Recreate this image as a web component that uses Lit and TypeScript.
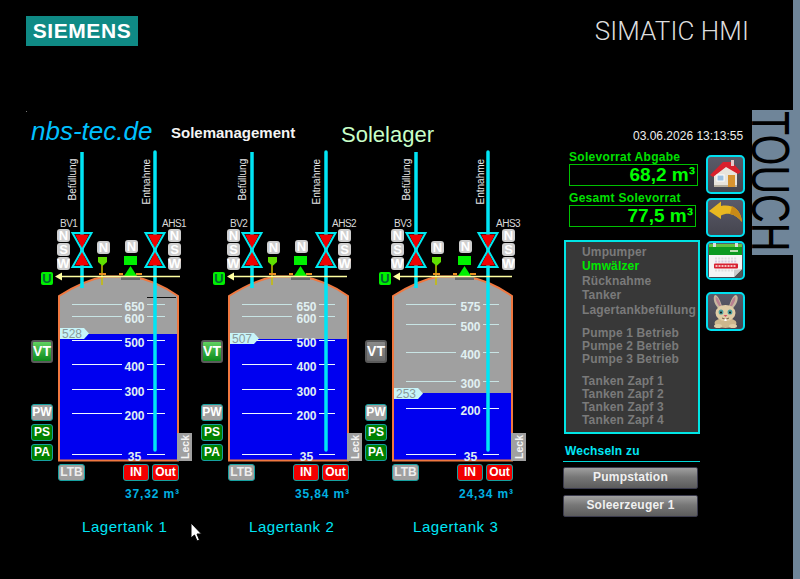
import { LitElement, html, css, svg } from "lit";
import { customElement } from "lit/decorators.js";

interface Tank {
  name: string; bv: string; ahs: string; level: number; levelTop: number; blueTop: number;
  scale: [string, number][]; vol: string; vtOn: boolean;
  pipeDx: number; uDx: number; lineEnd: number; labelDx: number; rLine: [number, number]; nameDx: number;
}
const TANKS: Tank[] = [
  { name: "Lagertank 1", bv: "BV1", ahs: "AHS1", level: 528, levelTop: 328, blueTop: 334, vol: "37,32 m³", vtOn: true,
    scale: [["650", 304], ["600", 316], ["500", 340], ["400", 364], ["300", 389], ["200", 413], ["35", 454]],
    pipeDx: 0, uDx: 0, lineEnd: 180, labelDx: 0, rLine: [147, 165], nameDx: 0 },
  { name: "Lagertank 2", bv: "BV2", ahs: "AHS2", level: 507, levelTop: 333, blueTop: 339, vol: "35,84 m³", vtOn: true,
    scale: [["650", 304], ["600", 316], ["500", 340], ["400", 364], ["300", 389], ["200", 413], ["35", 454]],
    pipeDx: 1, uDx: 2, lineEnd: 177, labelDx: 2, rLine: [149, 165], nameDx: -3 },
  { name: "Lagertank 3", bv: "BV3", ahs: "AHS3", level: 253, levelTop: 388, blueTop: 393, vol: "24,34 m³", vtOn: false,
    scale: [["575", 304], ["500", 324], ["400", 352], ["300", 381], ["200", 408], ["35", 454]],
    pipeDx: -1, uDx: 4, lineEnd: 178, labelDx: 2, rLine: [149, 165], nameDx: -3 },
];

const valve = (x: number) => svg`
  <path d="M${x - 9.500} 233H${x + 9.500}L${x - 9.500} 267H${x + 9.500}Z" fill="none" stroke="#00e8f0" stroke-width="2"/>
  <path d="M${x - 7} 234.500H${x + 7}L${x} 248Z" fill="#f00000"/>
  <path d="M${x - 7} 265.500H${x + 7}L${x} 252Z" fill="#f00000"/>`;

const HOME = html`<svg viewBox="0 0 35 35"><path d="M6 17V30H29V16L17 6Z" fill="#e8e4dc"/><path d="M6 28H29V30H6Z" fill="#b8b0a0"/><path d="M2 18L15 5H24L33 15L30 17L18 10L5 20Z" fill="#d8202c"/><path d="M23 3h3v6h-3z" fill="#e8c8c8"/><rect x="20" y="18" width="7" height="12" fill="#d89430"/><rect x="9" y="18" width="7" height="6" fill="#9cc0e0" stroke="#fff"/></svg>`;
const BACK = html`<svg viewBox="0 0 35 35"><path d="M1 11L13 1.500V6C24 4 33 9 34 22C31 18 27 15 22 14C19 13.500 16 14 13 15.500V19Z" fill="#e8b820"/><path d="M24 6C30 9 33.500 15 34 22C31 18 27 15 22 14Z" fill="#c88a18"/></svg>`;
const dots = [0, 1, 2, 3, 4, 5, 6];
const CAL = html`<svg viewBox="0 0 35 35"><rect x="1" y="1" width="33" height="33" fill="#f4f4f4"/><rect x="1" y="1" width="33" height="11" fill="#0c9a20"/><rect x="1" y="1" width="33" height="3" fill="#66c040"/><rect x="5" y="0" width="3" height="4" fill="#ddd"/><rect x="27" y="0" width="3" height="4" fill="#ddd"/><rect x="22" y="7" width="8" height="2" fill="#b8e0b0"/>
  ${dots.map((i) => svg`<rect x="${7 + i * 3.2}" y="14.500" width="2" height="2" fill="#ddd"/><rect x="${7 + i * 3.2}" y="17.500" width="2" height="2" fill="#d8c8e0"/><rect x="${7 + i * 3.2}" y="26.500" width="2" height="2" fill="#ddd"/>`)}
  <rect x="6" y="20.500" width="24" height="5" rx="1" fill="#d82030"/>${dots.map((i) => svg`<rect x="${7.500 + i * 3}" y="22" width="2" height="2" fill="#f6c0c0"/>`)}
  <path d="M34 26L26 34H34Z" fill="#555"/><path d="M34 26L26 34V27Z" fill="#ccc"/></svg>`;
const RABBIT = html`<svg viewBox="0 0 35 35"><path d="M10 14C5 9 5 2 7 1C10 1 13 8 14 13Z" fill="#c8b8a0"/><path d="M25 14C30 9 31 2 28 1C25 1 22 8 21 13Z" fill="#c8b8a0"/><path d="M11 12C8 8 7 4 8 3C10 4 12 8 13 12Z" fill="#b88090"/><path d="M24 12C27 8 28 4 27 3C25 4 23 8 22 12Z" fill="#b88090"/><ellipse cx="17.500" cy="29" rx="11" ry="5" fill="#cdb78e"/><ellipse cx="17.500" cy="19" rx="10" ry="8" fill="#e0cda6"/><ellipse cx="13" cy="18" rx="2.400" ry="2.600" fill="#4aa0a0"/><ellipse cx="22" cy="18" rx="2.400" ry="2.600" fill="#4aa0a0"/><circle cx="13" cy="18.500" r="1" fill="#111"/><circle cx="22" cy="18.500" r="1" fill="#111"/><path d="M15.500 21H19.500L17.500 23Z" fill="#d0506a"/><path d="M14 24Q17.500 27 21 24" fill="none" stroke="#5a4030" stroke-width=".8"/><rect x="16.400" y="25" width="2.200" height="2" fill="#fff"/><ellipse cx="10" cy="32" rx="4" ry="2" fill="#e0cda6"/><ellipse cx="25" cy="32" rx="4" ry="2" fill="#e0cda6"/></svg>`;

@customElement("tank-unit")
class TankUnit extends LitElement {
  static properties = { t: { attribute: false } };
  t!: Tank;
  static styles = css`
    :host { display: block; position: relative; height: 400px; }
    svg.d { position: absolute; left: 0; top: 0; width: 170px; height: 400px; overflow: visible; }
    svg text { font-family: "Liberation Sans", sans-serif; }
    .sc { font-size: 12px; font-weight: 700; fill: #e0f0f2; text-anchor: middle; }
    .lb { font-size: 10px; fill: #d8d8d8; letter-spacing: -.5px; }
    .rot { font-size: 10px; fill: #e8e8e8; }
    .tag { font-size: 12px; fill: #8a9a9a; }
    .k { position: absolute; width: 13px; height: 13px; border-radius: 3px; background: #cfcfcf; color: #fff; font: 700 13px/13px "Liberation Sans", sans-serif; text-align: center; }
    .nl { left: 27px; } .nr { left: 138px; }
    .r1 { top: 78px; } .r2 { top: 92px; } .r3 { top: 106px; }
    .m1 { left: 67px; top: 90px; } .m2 { left: 95px; top: 89px; }
    .u { position: absolute; top: 121px; left: 11px; width: 12px; height: 13px; background: #00f000; border-radius: 2px; color: #063; font: 700 13px/13px "Liberation Sans", sans-serif; text-align: center; }
    .b { position: absolute; box-sizing: border-box; border: 1px solid #16a0a0; border-radius: 3px; color: #fff; font: 700 12px/15px "Liberation Sans", sans-serif; text-align: center; }
    .vt { left: 1px; top: 189px; width: 22px; height: 23px; border: 2px solid #5a5a5a; font-size: 14px; line-height: 19px; background: linear-gradient(#8a8a8a, #6c6c6c); }
    .vt.on { background: linear-gradient(#60d060, #0c8a1c); }
    .s { left: 1px; width: 22px; height: 17px; }
    .pw { top: 253px; background: #a0a0a0; } .ps { top: 273px; background: #008000; } .pa { top: 293px; background: #008000; }
    .ltb { left: 28px; top: 313px; width: 27px; height: 17px; background: #a0a0a0; color: #eee; }
    .in { left: 93px; top: 313px; width: 26px; height: 17px; background: #f00000; }
    .out { left: 122px; top: 313px; width: 27px; height: 17px; background: #f00000; }
    .leck { position: absolute; left: 147px; top: 282px; width: 15px; height: 28px; background: #a0a0a0; color: #f4f4f4; display: flex; align-items: center; justify-content: center; font: 700 10.500px "Liberation Sans", sans-serif; }
    .leck span { writing-mode: vertical-rl; transform: rotate(180deg); }
    .vol { position: absolute; left: 95px; top: 336px; color: #00b0e0; font: 700 12px/14px "Liberation Sans", sans-serif; letter-spacing: .85px; white-space: nowrap; }
    .name { position: absolute; left: 52px; top: 367px; color: #00e5f5; font: 15px/18px "Liberation Sans", sans-serif; white-space: nowrap; letter-spacing: .55px; }
  `;
  render() {
    const t = this.t;
    const R = 155 + t.pipeDx;
    const tankBody = "M59 296C75 286 90 279 105 276.500L132 276.500C148 279 165 287 178 296V460.500H59Z";
    return html`
      <svg class="d" viewBox="30 151 170 400">
        <clipPath id="c"><path d="${tankBody}"/></clipPath>
        <path d="${tankBody}" fill="#a0a0a0"/>
        <rect x="59" y="${t.blueTop}" width="120" height="130" fill="#0000f0" clip-path="url(#c)"/>
        ${t.bv === "BV1" ? svg`<path d="M147 297.500H176" stroke="#111"/>` : ""}
        <path d="${tankBody}" fill="none" stroke="#f07840" stroke-width="2"/>
        ${t.scale.map(([l, y]) => svg`
          <path d="M72 ${y + .5}H122M${t.rLine[0]} ${y + .5}H${t.rLine[1]}" stroke="${y > t.blueTop ? "#f0f8ff" : "#c8e4e4"}"/>
          <text class="sc" x="${134.500 + t.labelDx}" y="${y + 6.500}">${l}</text>`)}
        <path d="M60 ${t.levelTop}H84L89 ${t.levelTop + 5.500}L84 ${t.levelTop + 11}H60Z" fill="#c8f4f8"/>
        <text class="tag" x="62" y="${t.levelTop + 10}">${t.level}</text>
        <path d="M82 152V288" stroke="#00e5f5" stroke-width="3.500"/>
        <path d="M${R} 152V450" stroke="#00e5f5" stroke-width="3.500" stroke-linecap="round"/>
        ${valve(82)}${valve(R)}
        <text class="rot" transform="translate(75.500 200.500) rotate(-90)">Befüllung</text>
        <text class="rot" transform="translate(149.500 204.500) rotate(-90)">Entnahme</text>
        <text class="lb" x="60" y="226.500">${t.bv}</text>
        <text class="lb" x="162" y="226.500">${t.ahs}</text>
        <path d="M102 265V285" stroke="#c8c000" stroke-width="1.500"/>
        <path d="M98 257H107V262L102.500 266L98 262Z" fill="#60e000"/>
        <path d="M99 274H106M119 274H123M136 274H142" stroke="#e89020" stroke-width="2"/>
        <rect x="121" y="276" width="19" height="4" fill="#666"/>
        <rect x="124" y="256" width="13" height="9" fill="#00f000"/>
        <path d="M130.500 266L137 276H124Z" fill="#00f000"/>
        <path d="M${60 + t.uDx} 276.500H${t.lineEnd}" stroke="#ffffa0" stroke-width="1.500"/>
        <path d="M${55 + t.uDx} 276.500L${62 + t.uDx} 272.500V280.500Z" fill="#ffffa0"/>
      </svg>
      <div class="k nl r1">N</div><div class="k nl r2">S</div><div class="k nl r3">W</div>
      <div class="k nr r1">N</div><div class="k nr r2">S</div><div class="k nr r3">W</div>
      <div class="k m1">N</div><div class="k m2">N</div>
      <div class="u" style="transform:translateX(${t.uDx}px)">U</div>
      <div class="b vt ${t.vtOn ? "on" : ""}">VT</div>
      <div class="b s pw">PW</div><div class="b s ps">PS</div><div class="b s pa">PA</div>
      <div class="leck"><span>Leck</span></div>
      <div class="b ltb">LTB</div><div class="b in">IN</div><div class="b out">Out</div>
      <div class="vol">${t.vol}</div>
      <div class="name" style="transform:translateX(${t.nameDx}px)">${t.name}</div>`;
  }
}

@customElement("app-root")
export class AppRoot extends LitElement {
  static styles = css`
    :host { display: block; position: relative; width: 800px; height: 579px; background: #000; overflow: hidden; font-family: "Liberation Sans", sans-serif; }
    .head { display: flex; justify-content: space-between; box-sizing: border-box; height: 110px; padding: 16px 51px 0 26px; }
    .logo { width: 112px; height: 30px; background: #0f8a85; color: #fff; font: 700 21px/30px "Liberation Sans", sans-serif; letter-spacing: .6px; text-align: center; }
    .hmi { color: #ddd; font: 300 26px/30px Roboto, sans-serif; letter-spacing: .1px; }
    .title { display: flex; height: 41px; padding-left: 31px; align-items: flex-start; }
    .nbs { color: #00c0ff; font: italic 26px/28px "Liberation Sans", sans-serif; margin-top: 7px; width: 140px; }
    .sm { color: #f4f4f4; font: 700 15px/18px "Liberation Sans", sans-serif; margin-top: 14px; width: 170px; }
    .sl { color: #c8ffc8; font: 22px/26px "Liberation Sans", sans-serif; margin-top: 12px; width: 292px; }
    .date { color: #eee; font: 12px/14px "Liberation Sans", sans-serif; margin-top: 19px; }
    .main { display: flex; }
    .tanks { display: grid; grid-template-columns: 170px 164px 170px; padding-left: 30px; }
    .side { display: flex; margin-left: 29px; }
    .col { width: 137px; }
    .lab { color: #00e000; font: 700 12px/13px "Liberation Sans", sans-serif; margin-left: 6px; letter-spacing: .3px; white-space: nowrap; }
    .val { box-sizing: border-box; height: 22px; margin-left: 6px; border: 1.500px solid #00c000; color: #00ff00; font: 700 19px/20px "Liberation Sans", sans-serif; text-align: right; padding-right: 2px; }
    .v1 { width: 129px; } .v2 { width: 127px; }
    .l2 { margin-top: 6px; }
    .list { box-sizing: border-box; width: 136px; height: 194px; margin: 13px 0 0 1px; padding: 3px 0 0 16px; border: 2px solid #00e5e5; background: #383838; color: #7a7a7a; font: 700 12px/14.400px "Liberation Sans", sans-serif; letter-spacing: .15px; white-space: nowrap; }
    .on { color: #00e800; }
    .g { line-height: 13px; margin-top: 10px; }
    .g.t { margin-top: 9px; }
    .wz { color: #00e5f5; font: 700 12px/14px "Liberation Sans", sans-serif; letter-spacing: .2px; margin-top: 10px; padding: 0 0 3px 2px; border-bottom: 1px solid #00d8d8; }
    .btn { box-sizing: border-box; width: 135px; height: 22px; margin-top: 6px; border: 1.500px solid #3a3a4c; border-radius: 2px; background: linear-gradient(#a0a0a0, #777 45%, #5c5c5c); color: #f0f0f0; font: 700 12px/19px "Liberation Sans", sans-serif; letter-spacing: .2px; text-align: center; }
    .btn.f { margin-top: 5px; }
    .icons { display: flex; flex-direction: column; gap: 4px; margin: 4px 0 0 6px; }
    .ic { box-sizing: border-box; width: 39px; height: 39px; border: 2px solid #00e0f0; border-radius: 5px; background: linear-gradient(#5a5a68, #45454f); overflow: hidden; }
    .ic svg { display: block; width: 35px; height: 35px; }
    .ic.rb { margin-top: 8px; }
    .strip { position: absolute; right: 0; top: 0; width: 7px; height: 100%; background: #6f8599; }
    .touch { position: absolute; left: 752px; top: 110px; width: 48px; height: 145px; background: #6f8599; }
    .touch span { display: block; writing-mode: vertical-rl; color: #000; font: 54px/46px "Liberation Sans", sans-serif; transform: scaleY(.735); transform-origin: top; margin: 1px 0 0 -4px; }
    .cur { position: absolute; left: 190px; top: 522px; width: 12px; height: 20px; }
    .dot { position: absolute; left: 26px; top: 111px; width: 1px; height: 1px; background: #777; }
  `;
  render() {
    return html`
      <div class="head"><div class="logo">SIEMENS</div><div class="hmi">SIMATIC HMI</div></div>
      <div class="title">
        <div class="nbs">nbs-tec.de</div><div class="sm">Solemanagement</div><div class="sl">Solelager</div>
        <div class="date">03.06.2026 13:13:55</div>
      </div>
      <div class="main">
        <div class="tanks">${TANKS.map((t) => html`<tank-unit .t=${t}></tank-unit>`)}</div>
        <div class="side">
          <div class="col">
            <div class="lab">Solevorrat Abgabe</div>
            <div class="val v1">68,2 m³</div>
            <div class="lab l2">Gesamt Solevorrat</div>
            <div class="val v2">77,5 m³</div>
            <div class="list">
              <div>Umpumper</div><div class="on">Umwälzer</div><div>Rücknahme</div><div>Tanker</div><div>Lagertankbefüllung</div>
              <div class="g"><div>Pumpe 1 Betrieb</div><div>Pumpe 2 Betrieb</div><div>Pumpe 3 Betrieb</div></div>
              <div class="g t"><div>Tanken Zapf 1</div><div>Tanken Zapf 2</div><div>Tanken Zapf 3</div><div>Tanken Zapf 4</div></div>
            </div>
            <div class="wz">Wechseln zu</div>
            <div class="btn f">Pumpstation</div>
            <div class="btn">Soleerzeuger 1</div>
          </div>
          <div class="icons">
            <div class="ic">${HOME}</div><div class="ic">${BACK}</div><div class="ic">${CAL}</div><div class="ic rb">${RABBIT}</div>
          </div>
        </div>
      </div>
      <div class="strip"></div>
      <div class="touch"><span>TOUCH</span></div>
      <div class="dot"></div>
      <svg class="cur" viewBox="0 0 12 20"><path d="M1 1V16L4.500 13L7 19L9.500 18L7 12H11.500Z" fill="#fff" stroke="#000"/></svg>`;
  }
}
